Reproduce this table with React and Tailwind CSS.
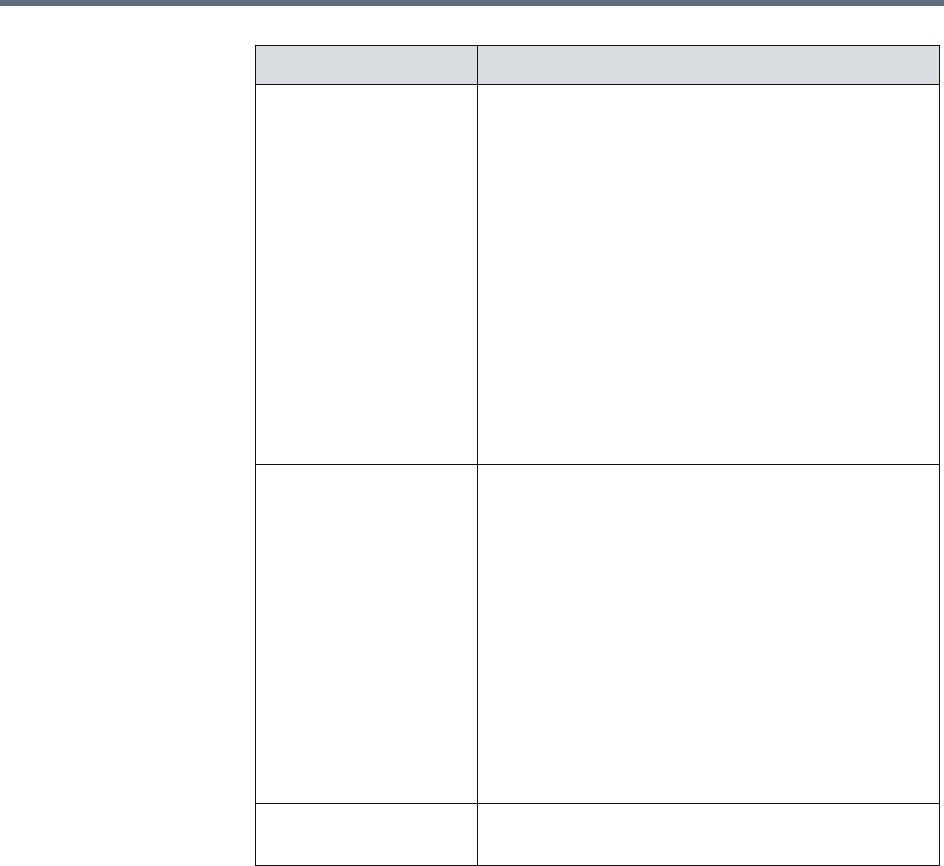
import React from 'react';

const rows = [
  { h: 'h-[380px]' },
  { h: 'h-[339px]' },
  { h: 'h-[62px]' },
];

export default function App() {
  return (
    <div className="min-h-screen bg-white font-['Liberation_Sans',sans-serif]">
      {/* top rule */}
      <div className="h-[6px] bg-[#5f6e7e]" />

      <div className="pl-[255px] pt-[39px]">
        <div className="w-[685px] border-l border-t border-[#111]">
          {/* header */}
          <div className="flex bg-[#dadddf]">
            <div className="h-[39px] w-[222px] border-r border-b border-[#111]" />
            <div className="h-[39px] w-[462px] border-r border-b border-[#111]" />
          </div>
          {rows.map((r, i) => (
            <div key={i} className="flex">
              <div className={`${r.h} w-[222px] border-r border-b border-[#111]`} />
              <div className={`${r.h} w-[462px] border-r border-b border-[#111]`} />
            </div>
          ))}
        </div>
      </div>
    </div>
  );
}
